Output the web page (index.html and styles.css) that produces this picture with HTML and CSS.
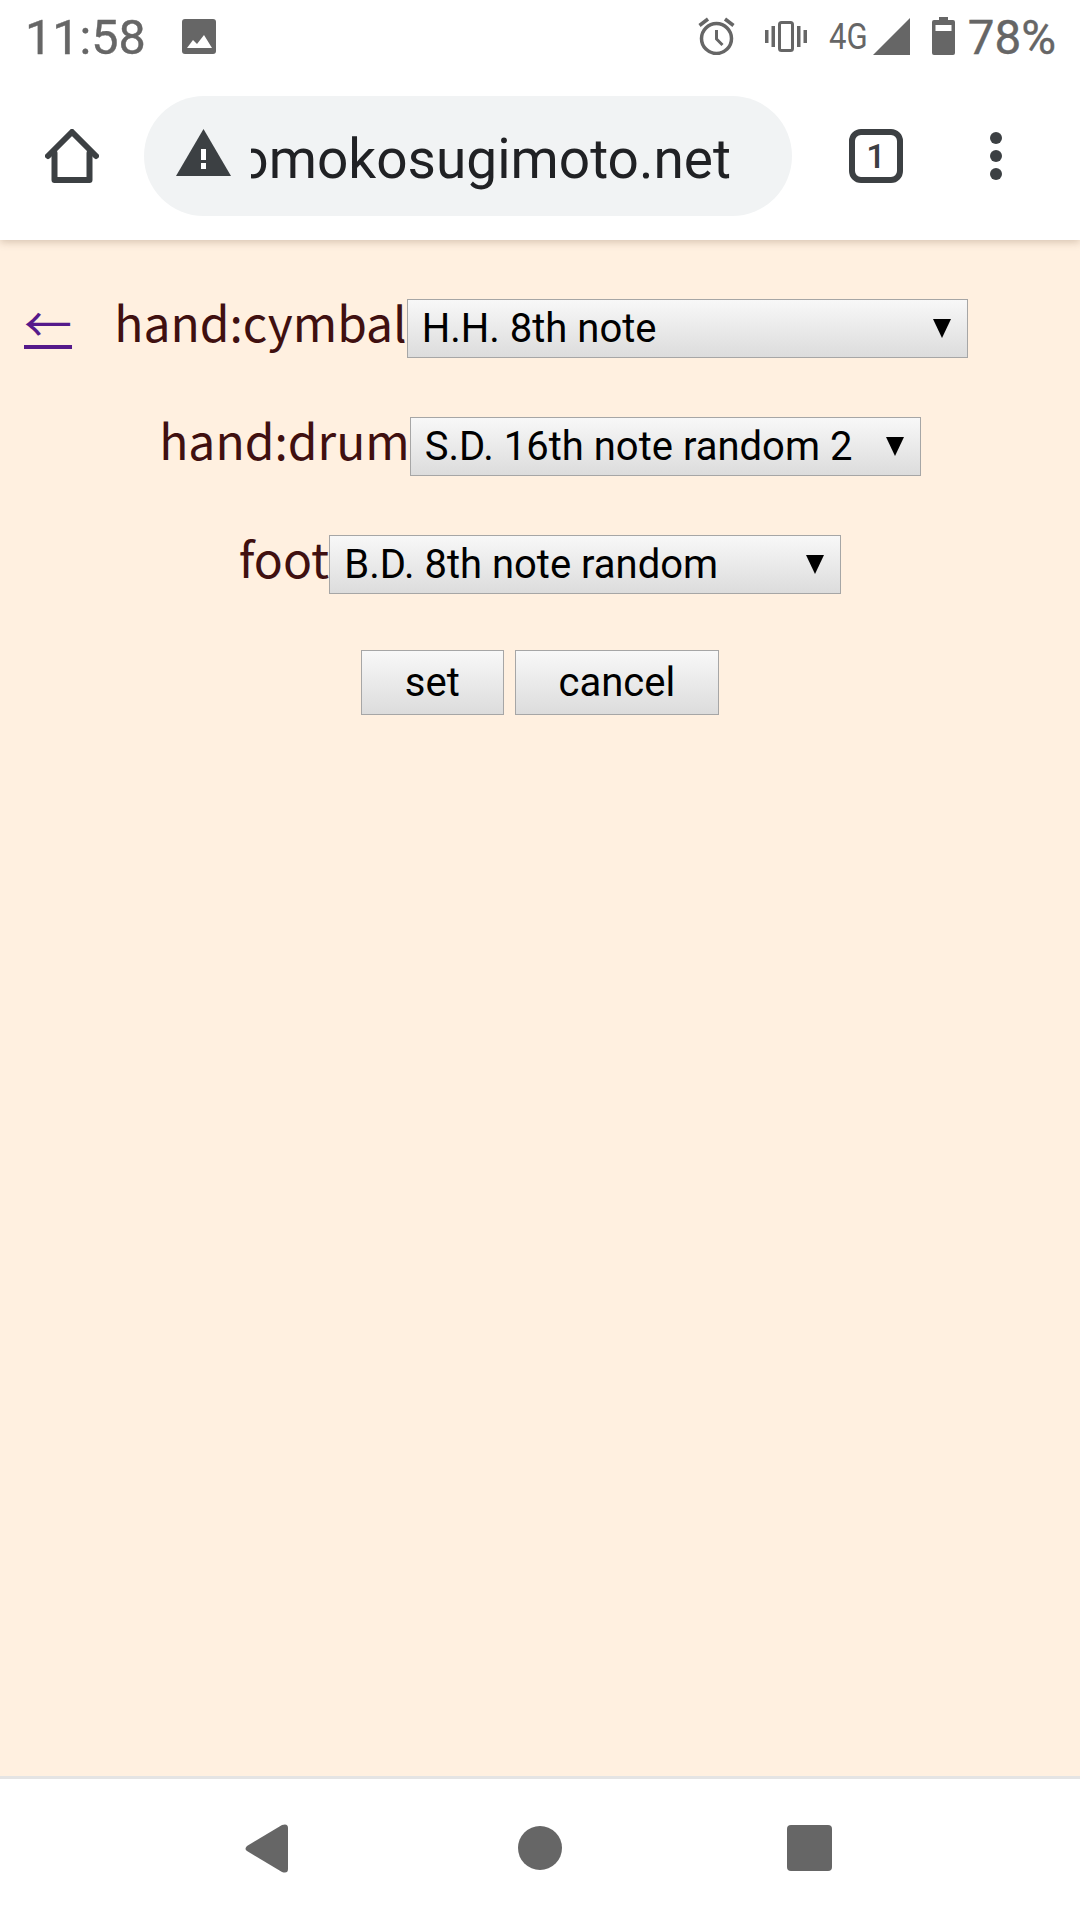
FILE: index.html
```html
<!DOCTYPE html>
<html lang="en">
<head>
  <meta charset="UTF-8" />
  <meta name="viewport" content="width=device-width, initial-scale=1.0"/>
  <title>Pattern settings</title>
  <link rel="stylesheet" href="styles.css">
</head>
<body>
  <div class="phone">
    <header class="chrome">
      <div class="status-bar">
        <span class="status-text">11:58</span>
        <svg class="icon-image" viewBox="0 0 34 35"><rect width="34" height="35" rx="3" fill="#666"/><path d="M5 29l6-8 4 4 7-9 8 13z" fill="#fff"/></svg>
        <div class="status-right">
          <svg class="icon-alarm" viewBox="0 0 37 38" fill="none" stroke="#666"><circle cx="18.500" cy="21.500" r="15" stroke-width="3.500"/><path d="M18.500 13v9l6 6" stroke-width="3"/><path d="M1.500 8.500L10 2M35.500 8.500L27 2" stroke-width="3.500"/></svg>
          <svg class="icon-vibrate" viewBox="0 0 42 31" fill="#666"><rect x="0" y="9" width="3.500" height="13"/><rect x="6.500" y="5" width="3.500" height="21"/><rect x="38.500" y="9" width="3.500" height="13"/><rect x="32" y="5" width="3.500" height="21"/><rect x="14.500" y="1.500" width="13" height="28" rx="2" fill="none" stroke="#666" stroke-width="3"/></svg>
          <span class="network">4G</span>
          <svg class="icon-signal" viewBox="0 0 37 37"><path d="M37 0v37H0z" fill="#666"/></svg>
          <svg class="icon-battery" viewBox="0 0 23 38"><path d="M7 0h9v3h5a2 2 0 0 1 2 2v31a2 2 0 0 1-2 2H2a2 2 0 0 1-2-2V5a2 2 0 0 1 2-2h5z" fill="#666"/><rect x="3.500" y="8" width="16" height="6" fill="#fff"/></svg>
          <span class="status-text status-pct">78%</span>
        </div>
      </div>
      <div class="toolbar">
        <svg class="icon-home" viewBox="0 0 54 54" fill="none" stroke="#3c4043" stroke-width="6" stroke-linejoin="round" stroke-linecap="round"><path d="M3 27L27 3l24 24"/><path d="M9.500 24v27h35V24"/></svg>
        <div class="omnibox">
          <svg class="icon-warning" viewBox="0 0 55 47"><path d="M27.500 0L55 47H0z" fill="#3c4043"/><rect x="25" y="20" width="5" height="11" fill="#fff"/><rect x="25" y="34" width="5" height="6" fill="#fff"/></svg>
          <div class="url"><span>tomokosugimoto.net</span></div>
        </div>
        <div class="tabs-count">1</div>
        <svg class="icon-menu" viewBox="0 0 12 48" fill="#3c4043"><circle cx="6" cy="6" r="6"/><circle cx="6" cy="24" r="6"/><circle cx="6" cy="42" r="6"/></svg>
      </div>
    </header>

    <main class="content">
      <a class="back" href="#">←</a>
      <form>
        <div class="row"><label for="cymbal">hand:cymbal</label><select id="cymbal" class="sel-cymbal"><option>H.H. 8th note</option></select></div>
        <div class="row"><label for="drum">hand:drum</label><select id="drum" class="sel-drum"><option>S.D. 16th note random 2</option></select></div>
        <div class="row"><label for="foot">foot</label><select id="foot" class="sel-foot"><option>B.D. 8th note random</option></select></div>
        <div class="row actions">
          <button type="button">set</button>
          <button type="button">cancel</button>
        </div>
      </form>
    </main>

    <nav class="nav-bar">
      <svg class="nav-back" viewBox="0 0 43 49"><path d="M2 22L37 1q6-2 6 3v41q0 5-6 3L2 27q-3-2 0-5z" fill="#666"/></svg>
      <svg class="nav-home" viewBox="0 0 44 44"><circle cx="22" cy="22" r="22" fill="#666"/></svg>
      <svg class="nav-recent" viewBox="0 0 45 46"><rect width="45" height="46" rx="4" fill="#666"/></svg>
    </nav>
  </div>
</body>
</html>
```

FILE: styles.css
```css
html, body {
  margin: 0;
  padding: 0;
}
body {
  font-family: Roboto, sans-serif;
  background: #fff;
}
svg {
  display: block;
  flex: none;
}
.phone {
  width: 1080px;
  height: 1920px;
  display: flex;
  flex-direction: column;
  overflow: hidden;
}

/* browser chrome */
.chrome {
  height: 240px;
  background: #fff;
  box-shadow: 0 2px 8px rgba(90,60,30,0.25);
  position: relative;
  flex: none;
}
.status-bar {
  height: 72px;
  display: flex;
  align-items: center;
  padding: 0 24px 0 25px;
}
.status-text {
  font-size: 48.5px;
  line-height: 72px;
  margin-top: 3px;
  color: #666;
  -webkit-text-stroke: 0.4px #666;
}
.status-pct {
  font-size: 47.5px;
}
.icon-image {
  width: 34px;
  height: 35px;
  margin-left: 36px;
}
.status-right {
  margin-left: auto;
  display: flex;
  align-items: center;
}
.icon-alarm {
  width: 37px;
  height: 38px;
}
.icon-vibrate {
  width: 42px;
  height: 31px;
  margin-left: 30px;
}
.network {
  font-size: 37px;
  color: #666;
  width: 38px;
  margin-left: 22px;
  transform: scaleX(0.84);
  transform-origin: left center;
}
.icon-signal {
  width: 37px;
  height: 37px;
  margin-left: 6px;
}
.icon-battery {
  width: 23px;
  height: 38px;
  margin: 0 13px 0 22px;
}
.toolbar {
  height: 168px;
  display: flex;
  align-items: center;
}
.icon-home {
  width: 54px;
  height: 54px;
  margin-left: 45px;
}
.omnibox {
  width: 648px;
  height: 120px;
  margin-left: 45px;
  border-radius: 60px;
  background: #f1f3f4;
  display: flex;
  align-items: center;
}
.icon-warning {
  width: 55px;
  height: 47px;
  margin: -8px 0 0 32px;
}
.url {
  width: 480px;
  margin: 6px 0 0 20px;
  overflow: hidden;
  display: flex;
  justify-content: flex-end;
  white-space: nowrap;
  font-size: 55px;
  color: #202124;
}
.tabs-count {
  width: 54px;
  height: 54px;
  box-sizing: border-box;
  margin-left: 57px;
  border: 6px solid #3c4043;
  border-radius: 12px;
  font-size: 34px;
  font-weight: 500;
  line-height: 42px;
  text-align: center;
  color: #3c4043;
}
.icon-menu {
  width: 12px;
  height: 48px;
  margin-left: 87px;
}

/* page */
.content {
  flex: 1;
  background: #fff0e0;
  padding: 51px 24px 0;
  font-family: "Noto Sans CJK JP", sans-serif;
  color: #401010;
  font-size: 48px;
}
.back {
  float: left;
  width: 48px;
  color: #551a8b;
  line-height: 60px;
  margin-right: -46px;
}
.row {
  text-align: center;
  height: 118px;
  line-height: 60px;
}
select {
  appearance: none;
  -webkit-appearance: none;
  height: 59px;
  box-sizing: border-box;
  padding: 0 0 0 14px;
  border: 1px solid #a6a6a6;
  border-radius: 0;
  font-family: Roboto, sans-serif;
  font-size: 40px;
  color: #000;
  background: url("data:image/svg+xml,%3Csvg xmlns='http://www.w3.org/2000/svg' width='18' height='19'%3E%3Cpath d='M0 0h18L9 19z'/%3E%3C/svg%3E") no-repeat right 16px center, linear-gradient(#f8f8f8, #dcdcdc);
}
.sel-cymbal {
  width: 561px;
}
.sel-drum {
  width: 511px;
}
.sel-foot {
  width: 512px;
}
button {
  height: 65px;
  padding: 0 43px;
  border: 1px solid #a6a6a6;
  border-radius: 0;
  font-family: Roboto, sans-serif;
  font-size: 40px;
  color: #000;
  background: linear-gradient(#f8f8f8, #dcdcdc);
}

/* android nav */
.nav-bar {
  height: 144px;
  box-sizing: border-box;
  flex: none;
  background: #fff;
  border-top: 3px solid #e4e4e4;
  display: flex;
  align-items: center;
  justify-content: center;
  padding: 0 3px 3px 0;
}
.nav-back {
  width: 43px;
  height: 49px;
}
.nav-home {
  width: 44px;
  height: 44px;
  margin-left: 230px;
}
.nav-recent {
  width: 45px;
  height: 46px;
  margin-left: 225px;
}
```
